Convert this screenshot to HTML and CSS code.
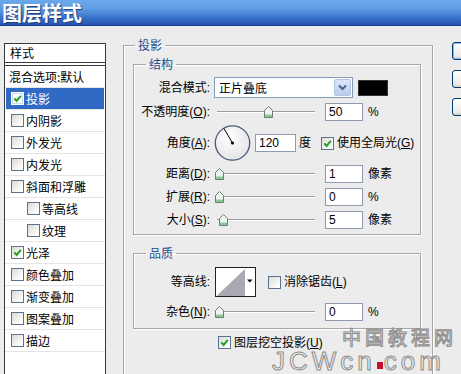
FILE: index.html
```html
<!DOCTYPE html>
<html lang="zh-CN">
<head>
<meta charset="utf-8">
<title>图层样式</title>
<link rel="stylesheet" href="styles.css">
</head>
<body>
<div class="titlebar"><span class="title">图层样式</span></div>
<div class="main">
  <div class="styles-panel">
    <div class="sp-head">样式</div>
    <ul class="sp-list">
      <li class="sp-item plain">混合选项:默认</li>
      <li class="sp-item selected"><span class="cb"><svg width="9" height="9" viewBox="0 0 9 9"><path d="M1.3 4.4 L3.6 6.9 L7.8 1.8" fill="none" stroke="#21A121" stroke-width="2"/></svg></span>投影</li>
      <li class="sp-item"><span class="cb"></span>内阴影</li>
      <li class="sp-item"><span class="cb"></span>外发光</li>
      <li class="sp-item"><span class="cb"></span>内发光</li>
      <li class="sp-item"><span class="cb"></span>斜面和浮雕</li>
      <li class="sp-item sub"><span class="cb"></span>等高线</li>
      <li class="sp-item sub"><span class="cb"></span>纹理</li>
      <li class="sp-item"><span class="cb"><svg width="9" height="9" viewBox="0 0 9 9"><path d="M1.3 4.4 L3.6 6.9 L7.8 1.8" fill="none" stroke="#21A121" stroke-width="2"/></svg></span>光泽</li>
      <li class="sp-item"><span class="cb"></span>颜色叠加</li>
      <li class="sp-item"><span class="cb"></span>渐变叠加</li>
      <li class="sp-item"><span class="cb"></span>图案叠加</li>
      <li class="sp-item"><span class="cb"></span>描边</li>
    </ul>
  </div>

  <fieldset class="group outer">
    <legend>投影</legend>
    <fieldset class="group inner struct">
      <legend>结构</legend>
      <div class="row r-mode">
        <span class="lbl">混合模式:</span>
        <div class="select"><span class="sel-text">正片叠底</span><span class="sel-btn"><svg width="9" height="7" viewBox="0 0 9 7"><path d="M1 1.5 L4.5 5 L8 1.5" fill="none" stroke="#4D6185" stroke-width="2"/></svg></span></div>
        <span class="swatch"></span>
      </div>
      <div class="row r-opacity">
        <span class="lbl">不透明度(<u>O</u>):</span>
        <div class="slider"><div class="track"></div><svg class="thumb" style="left:50px" width="9" height="12" viewBox="0 0 9 12"><path d="M0.5 4.5 L4.5 0.5 L8.5 4.5 V11.5 H0.5 Z" fill="#EEF5EE" stroke="#6D7D75"/><path d="M1 8.5 H8 V11 H1 Z" fill="#8CC79A"/></svg></div>
        <span class="num">50</span><span class="unit">%</span>
      </div>
      <div class="row r-angle">
        <span class="lbl">角度(<u>A</u>):</span>
        <svg class="dial" width="37" height="36" viewBox="0 0 37 36"><defs><radialGradient id="dg" cx=".4" cy=".35" r=".75"><stop offset="0" stop-color="#ffffff"/><stop offset="1" stop-color="#E2E2E2"/></radialGradient></defs><circle cx="18.5" cy="18" r="17.2" fill="url(#dg)" stroke="#4A5C7C" stroke-width="1.3"/><line x1="18.5" y1="18" x2="10" y2="3.6" stroke="#000" stroke-width="1"/><circle cx="18.5" cy="18" r="1.6" fill="#000"/></svg>
        <span class="num wide">120</span><span class="unit deg">度</span>
        <span class="cb gl"><svg width="9" height="9" viewBox="0 0 9 9"><path d="M1.3 4.4 L3.6 6.9 L7.8 1.8" fill="none" stroke="#21A121" stroke-width="2"/></svg></span><span class="cb-text">使用全局光(<u>G</u>)</span>
      </div>
      <div class="row r-dist">
        <span class="lbl">距离(<u>D</u>):</span>
        <div class="slider"><div class="track"></div><svg class="thumb" style="left:1px" width="9" height="12" viewBox="0 0 9 12"><path d="M0.5 4.5 L4.5 0.5 L8.5 4.5 V11.5 H0.5 Z" fill="#EEF5EE" stroke="#6D7D75"/><path d="M1 8.5 H8 V11 H1 Z" fill="#8CC79A"/></svg></div>
        <span class="num">1</span><span class="unit">像素</span>
      </div>
      <div class="row r-spread">
        <span class="lbl">扩展(<u>R</u>):</span>
        <div class="slider"><div class="track"></div><svg class="thumb" style="left:1px" width="9" height="12" viewBox="0 0 9 12"><path d="M0.5 4.5 L4.5 0.5 L8.5 4.5 V11.5 H0.5 Z" fill="#EEF5EE" stroke="#6D7D75"/><path d="M1 8.5 H8 V11 H1 Z" fill="#8CC79A"/></svg></div>
        <span class="num">0</span><span class="unit">%</span>
      </div>
      <div class="row r-size">
        <span class="lbl">大小(<u>S</u>):</span>
        <div class="slider"><div class="track"></div><svg class="thumb" style="left:5px" width="9" height="12" viewBox="0 0 9 12"><path d="M0.5 4.5 L4.5 0.5 L8.5 4.5 V11.5 H0.5 Z" fill="#EEF5EE" stroke="#6D7D75"/><path d="M1 8.5 H8 V11 H1 Z" fill="#8CC79A"/></svg></div>
        <span class="num">5</span><span class="unit">像素</span>
      </div>
    </fieldset>

    <fieldset class="group inner quality">
      <legend>品质</legend>
      <div class="row r-contour">
        <span class="lbl">等高线:</span>
        <svg class="contour" width="41" height="30" viewBox="0 0 41 30"><rect x="0.5" y="0.5" width="40" height="29" fill="#fff" stroke="#222"/><polygon points="1.5,29 30,2 30,29" fill="#A9A9B3"/><polygon points="32,12.5 37.5,12.5 34.75,15.5" fill="#000"/></svg>
        <span class="cb aa"></span><span class="cb-text">消除锯齿(<u>L</u>)</span>
      </div>
      <div class="row r-noise">
        <span class="lbl">杂色(<u>N</u>):</span>
        <div class="slider"><div class="track"></div><svg class="thumb" style="left:1px" width="9" height="12" viewBox="0 0 9 12"><path d="M0.5 4.5 L4.5 0.5 L8.5 4.5 V11.5 H0.5 Z" fill="#EEF5EE" stroke="#6D7D75"/><path d="M1 8.5 H8 V11 H1 Z" fill="#8CC79A"/></svg></div>
        <span class="num">0</span><span class="unit">%</span>
      </div>
    </fieldset>

    <div class="knockout">
      <span class="cb"><svg width="9" height="9" viewBox="0 0 9 9"><path d="M1.3 4.4 L3.6 6.9 L7.8 1.8" fill="none" stroke="#21A121" stroke-width="2"/></svg></span><span class="cb-text">图层挖空投影(<u>U</u>)</span>
    </div>
  </fieldset>

  <div class="buttons">
    <div class="btn default" role="button" aria-label="确定"></div>
    <div class="btn" role="button" aria-label="取消"></div>
    <div class="btn" role="button" aria-label="新建样式"></div>
  </div>
</div>

<div class="watermark">
  <div class="wm1">中国教程网</div>
  <div class="wm2">JCWcn<span class="reddot"></span>com</div>
</div>
</body>
</html>
```

FILE: styles.css
```css
html, body {
  margin: 0;
  padding: 0;
}

body {
  width: 461px;
  height: 374px;
  overflow: hidden;
  position: relative;
  background: #ECECEC;
  font-family: "Liberation Sans", "Noto Sans CJK SC", sans-serif;
  font-size: 12px;
  line-height: 16px;
  color: #000;
}

u {
  text-decoration: underline;
}

/* ---------- title bar ---------- */
.titlebar {
  height: 25px;
  border-bottom: 1px solid #1D3B7C;
  box-shadow: 0 1px 0 #E4ECF8;
  background: linear-gradient(#6CA8EA 0%, #62A0E6 30%, #4A86D6 55%, #3266C2 80%, #2955B3 100%);
  display: flex;
  align-items: center;
  padding-left: 2px;
}

.title {
  font-family: "Noto Sans CJK SC", sans-serif;
  font-weight: 700;
  font-size: 20px;
  line-height: 25px;
  color: #fff;
  text-shadow: 1px 1px 1px #1B3B78;
}

/* ---------- main layout ---------- */
.main {
  display: flex;
  align-items: flex-start;
  padding-left: 4px;
  width: max-content;
}

/* ---------- styles list ---------- */
.styles-panel {
  flex: none;
  width: 102px;
  height: 360px;
  box-sizing: border-box;
  margin-top: 17px;
  background: #fff;
  border: 1px solid #3A3A3A;
}

.sp-head {
  height: 18px;
  line-height: 18px;
  padding-left: 5px;
  border-bottom: 1px solid #3A3A3A;
  margin-bottom: 2px;
  font-family: "Noto Sans CJK SC", sans-serif;
}

.sp-list {
  list-style: none;
  margin: 0;
  padding: 0;
  border-top: 1px solid #3A3A3A;
}

.sp-item {
  height: 21px;
  border-bottom: 1px solid #E4E4E4;
  display: flex;
  align-items: center;
  padding-left: 6px;
  font-family: "Noto Sans CJK SC", sans-serif;
  line-height: 16px;
}

.sp-item.plain {
  padding-left: 4px;
}

.sp-item.sub {
  padding-left: 22px;
}

.sp-item.selected {
  background: #316AC5;
  color: #fff;
  margin: 0 1px;
  padding-left: 5px;
}

/* ---------- checkbox ---------- */
.cb {
  flex: none;
  width: 13px;
  height: 13px;
  box-sizing: border-box;
  border: 1px solid #5A7390;
  background: linear-gradient(135deg, #DADAD4, #FFFFFF 85%);
  display: inline-flex;
  align-items: center;
  justify-content: center;
  margin-right: 2px;
}

.selected .cb {
  background: #fff;
  border-color: #fff;
  box-shadow: inset 0 0 0 1px #C8D4E8;
}

.cb-text {
  font-family: "Liberation Sans", "Noto Sans CJK SC", sans-serif;
  margin-left: 1px;
}

/* ---------- group boxes ---------- */
fieldset.group {
  margin: 0;
  padding: 0;
  min-inline-size: 0;
  border: 1px solid #A6A6A6;
  box-shadow: inset 1px 1px 0 #FFFFFF, 1px 1px 0 #FFFFFF;
}

fieldset.group > legend {
  padding: 0 3px;
  line-height: 16px;
  color: #23508F;
  font-family: "Noto Sans CJK SC", sans-serif;
}

.outer {
  flex: none;
  width: 310px;
  box-sizing: border-box;
  margin-top: 11px !important;
  margin-left: 17px !important;
  padding-bottom: 60px !important;
}

.outer > legend {
  margin-left: 11px;
}

.inner {
  margin: 3px 11px 0 9px !important;
}

.inner > legend {
  margin-left: 12px;
}

.struct {
  padding-bottom: 5px !important;
}

.quality {
  margin-top: 10px !important;
  padding-bottom: 7px !important;
}

/* ---------- rows ---------- */
.row {
  display: flex;
  align-items: center;
  height: 18px;
  margin-top: 5px;
}

.lbl {
  flex: none;
  width: 76px;
  margin-right: 4px;
  text-align: right;
  white-space: nowrap;
}

.r-mode {
  height: 21px;
}

.r-angle {
  height: 36px;
  margin-top: 4px;
}

.r-dist {
  margin-top: 4px;
}

.r-contour {
  height: 30px;
  margin-top: 6px;
}

.r-noise {
  margin-top: 6px;
}

/* select */
.select {
  flex: none;
  width: 139px;
  height: 21px;
  box-sizing: border-box;
  border: 1px solid #7F9DB9;
  background: #fff;
  display: flex;
  align-items: center;
}

.sel-text {
  flex: 1;
  padding-left: 4px;
  font-family: "Noto Sans CJK SC", sans-serif;
}

.sel-btn {
  flex: none;
  width: 17px;
  height: 17px;
  margin: 1px;
  box-sizing: border-box;
  border: 1px solid #B3C4E6;
  border-radius: 2px;
  background: linear-gradient(#DCE6F8, #BACCEE);
  display: flex;
  align-items: center;
  justify-content: center;
}

.swatch {
  flex: none;
  width: 30px;
  height: 16px;
  box-sizing: border-box;
  margin-left: 5px;
  background: #000;
  border: 1px solid #333;
}

/* slider */
.slider {
  flex: none;
  position: relative;
  width: 101px;
  height: 18px;
}

.track {
  margin: 8px 0 0 3px;
  width: 98px;
  height: 0;
  border-top: 1px solid #9C9C9C;
  border-bottom: 1px solid #FFFFFF;
}

.thumb {
  position: absolute;
  top: 3px;
}

/* number fields */
.num {
  flex: none;
  width: 38px;
  height: 18px;
  box-sizing: border-box;
  margin-left: 10px;
  padding-left: 3px;
  border: 1px solid #8E9AAE;
  background: #fff;
  line-height: 16px;
}

.num.wide {
  width: 41px;
  margin-left: 4px;
}

.unit {
  margin-left: 5px;
  font-family: "Liberation Sans", "Noto Sans CJK SC", sans-serif;
}

.unit.deg {
  margin-left: 3px;
}

.dial {
  flex: none;
}

.cb.gl {
  margin-left: 10px;
}

.contour {
  flex: none;
  margin-left: 1px;
}

.cb.aa {
  margin-left: 12px;
}

/* knockout option */
.knockout {
  display: flex;
  align-items: center;
  height: 13px;
  margin: 7px 0 0 94px;
}

/* ---------- buttons ---------- */
.buttons {
  flex: none;
  margin-top: 16px;
  margin-left: 19px;
  display: flex;
  flex-direction: column;
  gap: 10px;
}

.btn {
  width: 75px;
  height: 18px;
  box-sizing: border-box;
  border: 1px solid #003C74;
  border-radius: 3px;
  background: linear-gradient(#FFFFFF, #ECEBE6 80%, #D6D0C5);
}

.btn.default {
  box-shadow: inset 0 0 0 1px #97B7E9;
}

/* ---------- watermark overlay ---------- */
.watermark {
  position: absolute;
  left: 0;
  top: 0;
}

.wm1 {
  position: absolute;
  left: 342px;
  top: 326px;
  font-family: "Noto Sans CJK SC", sans-serif;
  font-size: 19px;
  line-height: 22px;
  letter-spacing: 4px;
  white-space: nowrap;
  color: rgba(255, 255, 255, 0.55);
  -webkit-text-stroke: 1px #8C8C8C;
}

.wm2 {
  position: absolute;
  left: 272px;
  top: 348px;
  font-family: "Liberation Sans", sans-serif;
  font-size: 26px;
  line-height: 26px;
  letter-spacing: 4px;
  white-space: nowrap;
  color: rgba(255, 255, 255, 0.55);
  -webkit-text-stroke: 1px #8C8C8C;
}

.reddot {
  display: inline-block;
  width: 6px;
  height: 7px;
  background: #C8102E;
  margin: 0 1px 0 1px;
  vertical-align: 1px;
}
```
